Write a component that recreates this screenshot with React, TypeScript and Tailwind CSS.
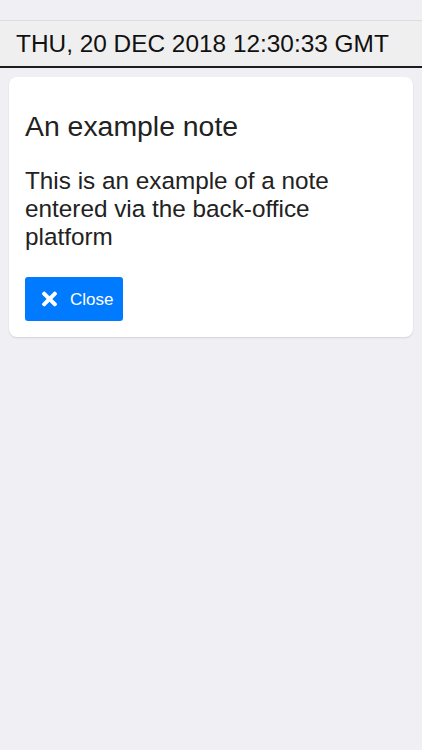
import React from 'react';
import { FaTimes } from 'react-icons/fa';

const App: React.FC = () => {
  return (
    <div
      className="min-h-[750px] bg-[#efeff4] pt-5"
      style={{ fontFamily: '"Liberation Sans", Arial, sans-serif' }}
    >
      {/* Barra de fecha */}
      <div className="h-[48px] border-t border-[#dcdce0] border-b-2 border-b-[#1c1c1c] bg-[#efefef] flex items-center pl-4">
        <span className="text-[24.4px] leading-none text-[#111] mt-[1px]">THU, 20 DEC 2018 12:30:33 GMT</span>
      </div>

      {/* Nota */}
      <div className="mx-[9px] mt-[9px] bg-white rounded-[8px] shadow-[0_1px_2px_rgba(0,0,0,0.12)] px-4 pt-[33px] pb-4">
        <h1 className="text-[28.4px] leading-[32px] text-[#222]">An example note</h1>
        <p className="mt-[25px] text-[24.3px] leading-[28px] text-[#222] pr-10">
          This is an example of a note entered via the back-office platform
        </p>
        <button
          type="button"
          className="mt-[26px] h-[44px] w-[98px] rounded-[3px] bg-[#007aff] text-white flex items-center pl-[17px]"
        >
          <FaTimes className="w-[15px] h-[22px]" />
          <span className="ml-[13px] text-[17px] leading-none">Close</span>
        </button>
      </div>
    </div>
  );
};

export default App;
